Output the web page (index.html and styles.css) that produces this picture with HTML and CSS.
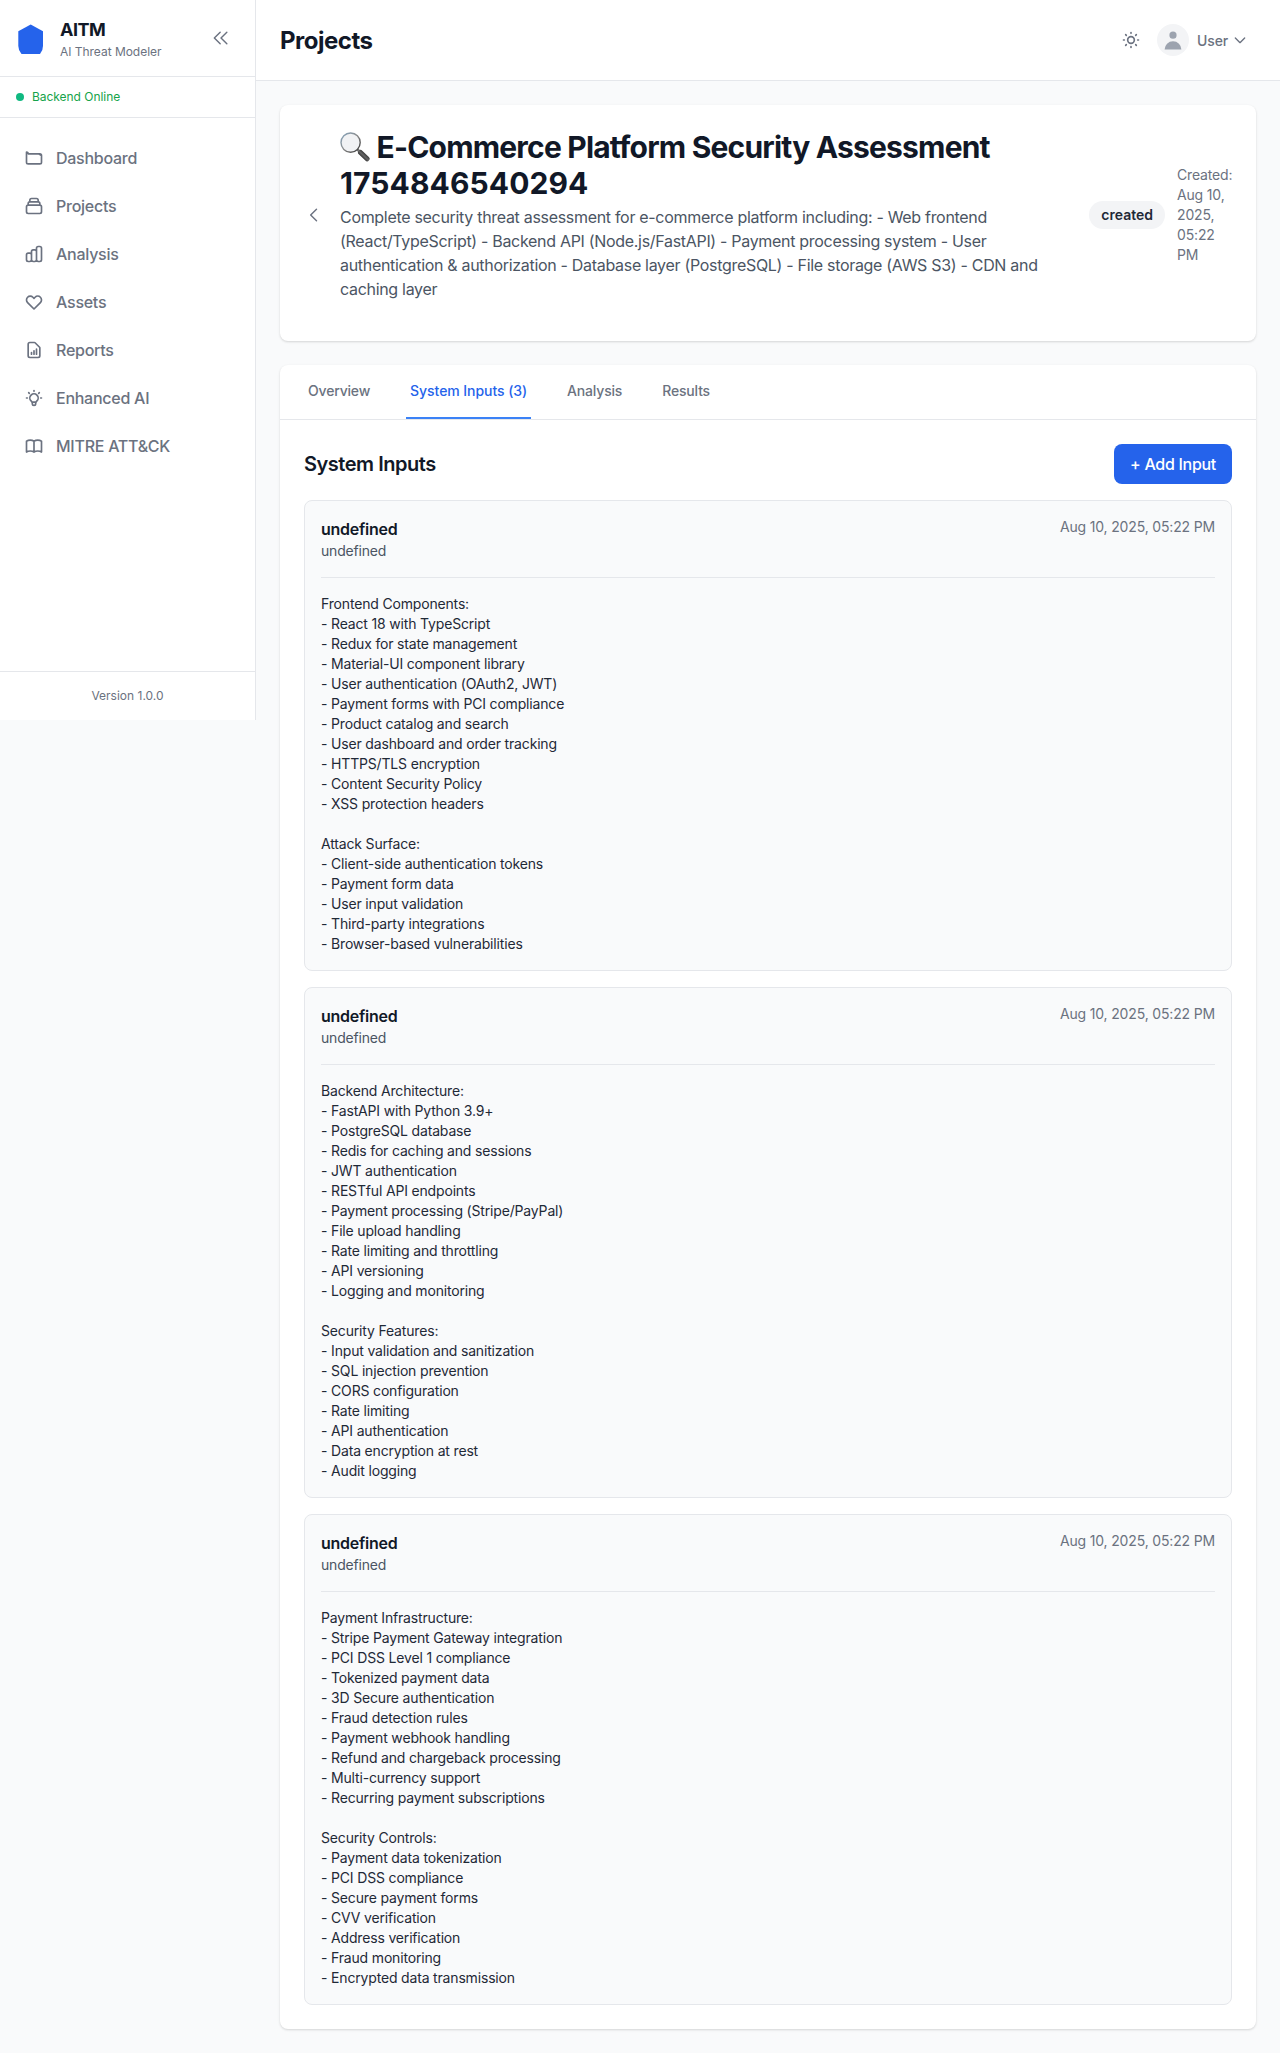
FILE: index.html
```
<!DOCTYPE html>
<html lang="en">
<head>
<meta charset="utf-8">
<title>AITM - Projects</title>
<link rel="stylesheet" href="styles.css">
</head>
<body>
<div class="app">
  <aside class="sidebar">
    <div class="brand">
      <svg class="brand-logo" viewBox="0 0 32 32"><path d="M14.7 2.4L27 9.2V24q0 4.500-3 8H5.500q-3.200-3.500-3.200-8V9.200z"/></svg>
      <div class="brand-text">
        <div class="brand-name">AITM</div>
        <div class="brand-sub">AI Threat Modeler</div>
      </div>
      <button class="collapse"><svg class="icon" viewBox="0 0 24 24"><path d="M11 19l-7-7 7-7m8 14l-7-7 7-7"/></svg></button>
    </div>
    <div class="status"><span class="status-dot"></span>Backend Online</div>
    <nav class="nav">
      <a class="nav-item"><svg class="icon" viewBox="0 0 24 24"><path d="M3 7v10a2 2 0 002 2h14a2 2 0 002-2V9a2 2 0 00-2-2H5a2 2 0 00-2-2v2M18.500 7.600l2 1.200"/></svg>Dashboard</a>
      <a class="nav-item"><svg class="icon" viewBox="0 0 24 24"><path d="M19 11H5m14 0a2 2 0 012 2v6a2 2 0 01-2 2H5a2 2 0 01-2-2v-6a2 2 0 012-2m14 0V9a2 2 0 00-2-2M5 11V9a2 2 0 012-2m0 0V5a2 2 0 012-2h6a2 2 0 012 2v2M7 7h10"/></svg>Projects</a>
      <a class="nav-item"><svg class="icon" viewBox="0 0 24 24"><path d="M9 19v-6a2 2 0 00-2-2H5a2 2 0 00-2 2v6a2 2 0 002 2h2a2 2 0 002-2zm0 0V9a2 2 0 012-2h2a2 2 0 012 2v10m-6 0a2 2 0 002 2h2a2 2 0 002-2m0 0V5a2 2 0 012-2h2a2 2 0 012 2v14a2 2 0 01-2 2h-2a2 2 0 01-2-2z"/></svg>Analysis</a>
      <a class="nav-item"><svg class="icon" viewBox="0 0 24 24"><path d="M4.318 6.318a4.500 4.500 0 000 6.364L12 20.364l7.682-7.682a4.500 4.500 0 00-6.364-6.364L12 7.636l-1.318-1.318a4.500 4.500 0 00-6.364 0z"/></svg>Assets</a>
      <a class="nav-item"><svg class="icon" viewBox="0 0 24 24"><path d="M9 17v-2m3 2v-4m3 4v-6m2 10H7a2 2 0 01-2-2V5a2 2 0 012-2h5.586a1 1 0 01.707.293l5.414 5.414a1 1 0 01.293.707V19a2 2 0 01-2 2z"/></svg>Reports</a>
      <a class="nav-item"><svg class="icon" viewBox="0 0 24 24"><path d="M9.663 17h4.673M12 3v1m6.364 1.636l-.707.707M21 12h-1M4 12H3m3.343-5.657l-.707-.707m2.828 9.900a5 5 0 117.072 0l-.548.547A3.374 3.374 0 0014 18.469V19a2 2 0 11-4 0v-.531c0-.895-.356-1.754-.988-2.386l-.548-.547z"/></svg>Enhanced AI</a>
      <a class="nav-item"><svg class="icon" viewBox="0 0 24 24"><path d="M12 6.253v13m0-13C10.832 5.477 9.246 5 7.500 5S4.168 5.477 3 6.253v13C4.168 18.477 5.754 18 7.500 18s3.332.477 4.500 1.253m0-13C13.168 5.477 14.754 5 16.500 5c1.747 0 3.332.477 4.500 1.253v13C19.832 18.477 18.247 18 16.500 18c-1.746 0-3.332.477-4.500 1.253"/></svg>MITRE ATT&amp;CK</a>
    </nav>
    <div class="version">Version 1.0.0</div>
  </aside>

  <div class="main">
    <header class="topbar">
      <div class="page-title">Projects</div>
      <div class="topbar-actions">
        <button class="theme"><svg class="icon" viewBox="0 0 24 24"><path d="M12 3v1m0 16v1m9-9h-1M4 12H3m15.364 6.364l-.707-.707M6.343 6.343l-.707-.707m12.728 0l-.707.707M6.343 17.657l-.707.707M16 12a4 4 0 11-8 0 4 4 0 018 0z"/></svg></button>
        <div class="user">
          <span class="avatar"><svg viewBox="0 0 20 20"><path d="M10 9a3 3 0 100-6 3 3 0 000 6zm-7 9a7 7 0 1114 0H3z"/></svg></span>
          <span class="user-name">User</span>
          <svg class="icon icon-small" viewBox="0 0 24 24"><path d="M19 9l-7 7-7-7"/></svg>
        </div>
      </div>
    </header>

    <main class="content">
      <section class="card project">
        <svg class="icon" viewBox="0 0 24 24"><path d="M15 19l-7-7 7-7"/></svg>
        <div class="project-info">
          <h1 class="project-title"><svg class="magnifier" viewBox="0 0 30 30">
            <defs>
              <linearGradient id="rim" x1="0" y1="0" x2="1" y2="1"><stop offset="0" stop-color="#86a5bd"/><stop offset=".5" stop-color="#8a8a8a"/><stop offset="1" stop-color="#333"/></linearGradient>
              <linearGradient id="grip" x1="0" y1="1" x2="1" y2="0"><stop offset="0" stop-color="#111"/><stop offset=".5" stop-color="#666"/><stop offset="1" stop-color="#111"/></linearGradient>
            </defs>
            <path d="M17.500 17.500l3 3" stroke="#777" stroke-width="2.500"/>
            <path d="M20.500 20.500l6.600 6.300" stroke="url(#grip)" stroke-width="5" stroke-linecap="round"/>
            <circle cx="10.600" cy="10.600" r="9.600" fill="#f1f2f4" stroke="url(#rim)" stroke-width="1.400"/>
          </svg><span class="title-line">E-Commerce Platform Security Assessment</span> <span class="title-id">1754846540294</span></h1>
          <p class="project-desc">Complete security threat assessment for e-commerce platform including: - Web frontend (React/TypeScript) - Backend API (Node.js/FastAPI) - Payment processing system - User authentication &amp; authorization - Database layer (PostgreSQL) - File storage (AWS S3) - CDN and caching layer</p>
        </div>
        <span class="badge">created</span>
        <div class="created">Created: Aug 10, 2025, 05:22 PM</div>
      </section>

      <section class="card">
        <div class="tabs">
          <a class="tab">Overview</a>
          <a class="tab active">System Inputs (3)</a>
          <a class="tab">Analysis</a>
          <a class="tab">Results</a>
        </div>
        <div class="panel">
          <div class="panel-head">
            <h2 class="panel-title">System Inputs</h2>
            <button class="add">+ Add Input</button>
          </div>

          <article class="input">
            <div class="input-head">
              <div><div class="input-title">undefined</div><div class="input-type">undefined</div></div>
              <time class="input-date">Aug 10, 2025, 05:22 PM</time>
            </div>
            <div class="input-body">Frontend Components:
- React 18 with TypeScript
- Redux for state management
- Material-UI component library
- User authentication (OAuth2, JWT)
- Payment forms with PCI compliance
- Product catalog and search
- User dashboard and order tracking
- HTTPS/TLS encryption
- Content Security Policy
- XSS protection headers

Attack Surface:
- Client-side authentication tokens
- Payment form data
- User input validation
- Third-party integrations
- Browser-based vulnerabilities</div>
          </article>

          <article class="input">
            <div class="input-head">
              <div><div class="input-title">undefined</div><div class="input-type">undefined</div></div>
              <time class="input-date">Aug 10, 2025, 05:22 PM</time>
            </div>
            <div class="input-body">Backend Architecture:
- FastAPI with Python 3.9+
- PostgreSQL database
- Redis for caching and sessions
- JWT authentication
- RESTful API endpoints
- Payment processing (Stripe/PayPal)
- File upload handling
- Rate limiting and throttling
- API versioning
- Logging and monitoring

Security Features:
- Input validation and sanitization
- SQL injection prevention
- CORS configuration
- Rate limiting
- API authentication
- Data encryption at rest
- Audit logging</div>
          </article>

          <article class="input">
            <div class="input-head">
              <div><div class="input-title">undefined</div><div class="input-type">undefined</div></div>
              <time class="input-date">Aug 10, 2025, 05:22 PM</time>
            </div>
            <div class="input-body">Payment Infrastructure:
- Stripe Payment Gateway integration
- PCI DSS Level 1 compliance
- Tokenized payment data
- 3D Secure authentication
- Fraud detection rules
- Payment webhook handling
- Refund and chargeback processing
- Multi-currency support
- Recurring payment subscriptions

Security Controls:
- Payment data tokenization
- PCI DSS compliance
- Secure payment forms
- CVV verification
- Address verification
- Fraud monitoring
- Encrypted data transmission</div>
          </article>
        </div>
      </section>
    </main>
  </div>
</div>
</body>
</html>
```
FILE: styles.css
```
* { box-sizing: border-box; margin: 0; padding: 0; }

body {
  background: #f9fafb;
  color: #111827;
  font: 400 14px/20px Inter, "Liberation Sans", sans-serif;
  letter-spacing: -0.16px;
}

button { border: 0; background: none; font: inherit; color: inherit; }

.app { display: flex; align-items: flex-start; }

.icon {
  display: block;
  flex: none;
  width: 20px;
  height: 20px;
  fill: none;
  stroke: #6b7280;
  stroke-width: 2;
  stroke-linecap: round;
  stroke-linejoin: round;
}
.collapse .icon, .project > .icon { stroke-width: 1.7; }
.icon-small { width: 16px; height: 16px; }

/* Sidebar */
.sidebar {
  display: flex;
  flex-direction: column;
  flex: none;
  width: 256px;
  height: 720px;
  background: #fff;
  border-right: 1px solid #e5e7eb;
}
.brand {
  display: flex;
  align-items: center;
  gap: 12px;
  padding: 16px;
  border-bottom: 1px solid #e5e7eb;
}
.brand-logo { display: block; width: 32px; height: 32px; fill: #2563eb; }
.brand-text { flex: 1; }
.brand-name { font-size: 18px; font-weight: 700; line-height: 28px; letter-spacing: -0.5px; }
.brand-sub { font-size: 12px; line-height: 16px; letter-spacing: -0.03px; color: #6b7280; }
.collapse { padding: 8px; }
.status {
  display: flex;
  align-items: center;
  gap: 8px;
  padding: 12px 16px;
  border-bottom: 1px solid #e5e7eb;
  font-size: 12px;
  line-height: 16px;
  letter-spacing: -0.04px;
  color: #16a34a;
}
.status-dot { width: 8px; height: 8px; border-radius: 50%; background: #10b981; }
.nav { display: flex; flex-direction: column; gap: 8px; flex: 1; padding: 20px 12px; }
.nav-item {
  display: flex;
  align-items: center;
  gap: 12px;
  height: 40px;
  padding: 0 12px;
  font-size: 16px;
  font-weight: 500;
  letter-spacing: -0.26px;
  color: #6b7280;
}
.version {
  padding: 16px;
  border-top: 1px solid #e5e7eb;
  font-size: 12px;
  line-height: 16px;
  letter-spacing: 0;
  text-align: center;
  color: #6b7280;
}

/* Top bar */
.main { flex: 1; min-width: 0; }
.topbar {
  display: flex;
  align-items: center;
  justify-content: space-between;
  height: 81px;
  padding: 0 24px;
  background: #fff;
  border-bottom: 1px solid #e5e7eb;
}
.page-title { padding-top: 2px; font-size: 24px; font-weight: 700; line-height: 32px; letter-spacing: -0.5px; }
.topbar-actions { display: flex; align-items: center; gap: 8px; padding-right: 8px; }
.theme { padding: 8px; }
.user { display: flex; align-items: center; }
.avatar {
  display: flex;
  align-items: center;
  justify-content: center;
  width: 32px;
  height: 32px;
  margin-right: 8px;
  border-radius: 50%;
  background: #f3f4f6;
}
.avatar svg { width: 24px; height: 24px; fill: #9ca3af; }
.user-name { margin-right: 4px; padding-top: 2px; font-weight: 500; color: #6b7280; }

/* Cards */
.content { display: flex; flex-direction: column; gap: 24px; padding: 24px; }
.card { background: #fff; border-radius: 8px; box-shadow: 0 1px 3px rgba(0, 0, 0, .1), 0 1px 2px rgba(0, 0, 0, .06); }
.project { display: flex; align-items: center; padding: 24px 24px 40px; }
.project-info { flex: 1; padding-right: 22px; margin-left: 16px; }
.project-title { font-size: 30px; font-weight: 700; line-height: 36px; }
.title-line { letter-spacing: -0.8px; }
.title-id { letter-spacing: 0.1px; }
.magnifier { display: inline-block; width: 30px; height: 30px; margin-right: 6.5px; vertical-align: -4px; }
.project-desc { margin-top: 4px; font-size: 16px; line-height: 24px; letter-spacing: -0.308px; color: #4b5563; }
.badge {
  padding: 4px 12px;
  border-radius: 14px;
  background: #f3f4f6;
  font-weight: 600;
  letter-spacing: 0;
  color: #1f2937;
}
.created { width: 55px; margin-left: 12px; color: #6b7280; }

/* Tabs */
.tabs { display: flex; gap: 32px; padding: 0 24px; border-bottom: 1px solid #e5e7eb; }
.tab {
  padding: 16px 4px;
  border-bottom: 2px solid transparent;
  font-weight: 500;
  letter-spacing: -0.18px;
  color: #6b7280;
}
.tab.active { border-color: #3b82f6; letter-spacing: -0.06px; color: #2563eb; }

/* System inputs */
.panel { display: flex; flex-direction: column; gap: 16px; padding: 24px; }
.panel-head { display: flex; align-items: center; justify-content: space-between; }
.panel-title { font-size: 20px; font-weight: 600; line-height: 28px; letter-spacing: -0.48px; }
.add {
  padding: 8px 16px;
  border-radius: 8px;
  background: #2563eb;
  font-size: 16px;
  font-weight: 500;
  line-height: 24px;
  letter-spacing: -0.29px;
  color: #fff;
}
.input { padding: 16px; border: 1px solid #e5e7eb; border-radius: 8px; background: #f9fafb; }
.input-head {
  display: flex;
  align-items: flex-start;
  justify-content: space-between;
  padding-bottom: 16px;
  margin-bottom: 16px;
  border-bottom: 1px solid #e5e7eb;
}
.input-title { font-size: 16px; font-weight: 600; line-height: 24px; letter-spacing: -0.25px; }
.input-type { letter-spacing: -0.2px; color: #4b5563; }
.input-date { color: #6b7280; }
.input-body { white-space: pre-wrap; letter-spacing: -0.17px; color: #1f2937; }
```
